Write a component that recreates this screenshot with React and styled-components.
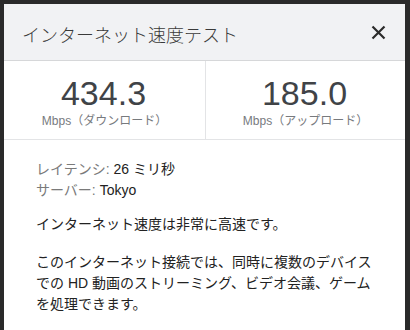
import React from "react";
import styled, { createGlobalStyle } from "styled-components";

const GlobalStyle = createGlobalStyle`
  html, body {
    margin: 0;
    padding: 0;
    background: #2a2a2a;
  }
  body {
    font-family: "Liberation Sans", "Noto Sans CJK JP", sans-serif;
  }
`;

const stats = [
  { value: "434.3", label: "Mbps（ダウンロード）" },
  { value: "185.0", label: "Mbps（アップロード）" },
];

export default function App() {
  return (
    <>
      <GlobalStyle />
      <Panel>
        <Header>
          <Title>インターネット速度テスト</Title>
          <CloseButton aria-label="閉じる">
            <svg width="15" height="15" viewBox="0 0 15 15">
              <path d="M1.5 1.5 L13.5 13.5 M13.5 1.5 L1.5 13.5" stroke="#2b2b2b" strokeWidth="2.2" fill="none" />
            </svg>
          </CloseButton>
        </Header>
        <StatsRow>
          {stats.map((s) => (
            <Stat key={s.label}>
              <StatValue>{s.value}</StatValue>
              <StatLabel>{s.label}</StatLabel>
            </Stat>
          ))}
        </StatsRow>
        <Body>
          <InfoLine>
            <Muted>レイテンシ: </Muted>26 ミリ秒
          </InfoLine>
          <InfoLine>
            <Muted>サーバー: </Muted>Tokyo
          </InfoLine>
          <Paragraph $gap={13}>インターネット速度は非常に高速です。</Paragraph>
          <Paragraph $gap={17}>
            このインターネット接続では、同時に複数のデバイスでの HD 動画のストリーミング、ビデオ会議、ゲームを処理できます。
          </Paragraph>
        </Body>
      </Panel>
    </>
  );
}

const Panel = styled.div`
  margin: 4px 5px 0 4px;
  height: 326px;
  background: #ffffff;
  display: flex;
  flex-direction: column;
  overflow: hidden;
`;

const Header = styled.div`
  height: 57px;
  box-sizing: border-box;
  background: #f1f2f4;
  border-bottom: 1px solid #d6d7d9;
  display: flex;
  align-items: center;
  justify-content: space-between;
  padding: 0 18px 0 18px;
`;

const Title = styled.div`
  font-size: 18px;
  color: #3a3a3a;
  margin-top: 4px;
  font-family: "Noto Sans CJK JP", sans-serif;
  font-weight: 300;
`;

const CloseButton = styled.div`
  width: 15px;
  height: 15px;
  display: flex;
  margin-right: 1px;
`;

const StatsRow = styled.div`
  display: grid;
  grid-template-columns: 201px 1fr;
  height: 79px;
  border-bottom: 1px solid #e3e4e6;
  box-sizing: border-box;
`;

const Stat = styled.div`
  display: flex;
  flex-direction: column;
  align-items: center;
  padding-top: 12px;
  & + & {
    border-left: 1px solid #e3e4e6;
  }
`;

const StatValue = styled.div`
  font-size: 34px;
  line-height: 40px;
  color: #404347;
  font-family: "Liberation Sans", sans-serif;
  margin-left: -2px;
`;

const StatLabel = styled.div`
  font-size: 12px;
  line-height: 14px;
  color: #777a7e;
  font-family: "Liberation Sans", "Noto Sans CJK JP", sans-serif;
  margin-top: 1px;
`;

const Body = styled.div`
  padding: 19px 28px 0 32px;
  font-size: 14px;
  line-height: 21px;
  color: #222;
  font-family: "Liberation Sans", "Noto Sans CJK JP", sans-serif;
`;

const InfoLine = styled.div``;

const Muted = styled.span`
  color: #7a7a7a;
`;

const Paragraph = styled.p`
  margin: ${(p) => p.$gap}px 0 0;
`;
